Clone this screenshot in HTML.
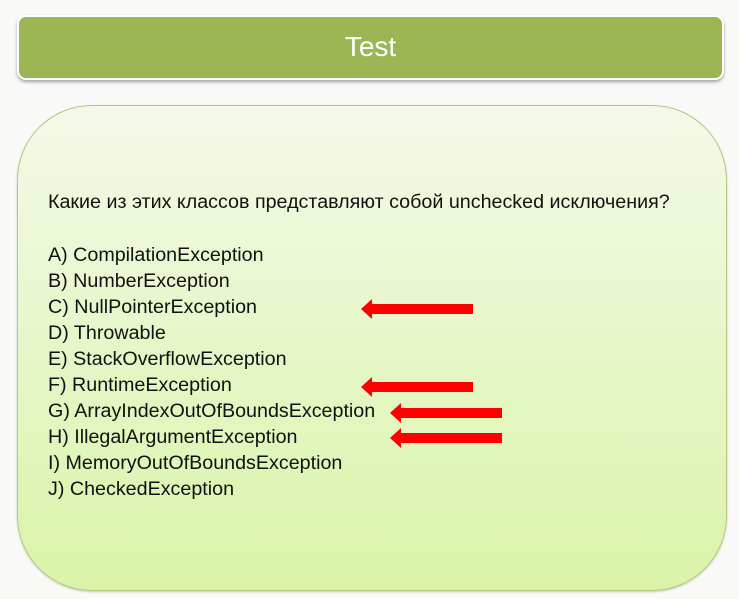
<!DOCTYPE html>
<html><head><meta charset="utf-8"><style>
html,body{margin:0;padding:0;}
body{width:739px;height:599px;background:#f9faf8;position:relative;overflow:hidden;font-family:"Liberation Sans",sans-serif;}
.hdr{position:absolute;left:17px;top:15px;width:707px;height:65px;background:#9bb653;border-radius:9px;border:2px solid #fff;box-shadow:0 2px 3px rgba(0,0,0,0.35);box-sizing:border-box;}
.hdr span{position:absolute;left:0;right:0;top:14px;text-align:center;color:#fff;font-size:28px;}
.panel{position:absolute;left:17px;top:105px;width:710px;height:486px;border-radius:75px;border:1px solid #b6c77e;background:linear-gradient(#f3f9e8,#d9f4a8);box-sizing:border-box;box-shadow:0 1px 2px rgba(0,0,0,0.2);}
.t{position:absolute;left:48px;font-size:19.7px;color:#111;white-space:nowrap;}
</style></head><body>
<div class="hdr"><span>Test</span></div>
<div class="panel"></div>
<div class="t" style="top:191px">Какие из этих классов представляют собой unchecked исключения?</div>
<div class="t" style="top:244px">A) CompilationException</div>
<div class="t" style="top:270px">B) NumberException</div>
<div class="t" style="top:296px">C) NullPointerException</div>
<div class="t" style="top:322px">D) Throwable</div>
<div class="t" style="top:348px">E) StackOverflowException</div>
<div class="t" style="top:374px">F) RuntimeException</div>
<div class="t" style="top:400px">G) ArrayIndexOutOfBoundsException</div>
<div class="t" style="top:426px">H) IllegalArgumentException</div>
<div class="t" style="top:452px">I) MemoryOutOfBoundsException</div>
<div class="t" style="top:478px">J) CheckedException</div>
<svg width="739" height="599" style="position:absolute;left:0;top:0">
<g fill="#f00">
<path d="M361 309 L372 299 L372 304 L473 304 L473 314 L372 314 L372 319 Z"/>
<path d="M361 387 L372 377 L372 382 L473 382 L473 392 L372 392 L372 397 Z"/>
<path d="M390 413 L401 403 L401 408 L502 408 L502 418 L401 418 L401 423 Z"/>
<path d="M390 438 L401 428 L401 433 L502 433 L502 443 L401 443 L401 448 Z"/>
</g></svg>
</body></html>
